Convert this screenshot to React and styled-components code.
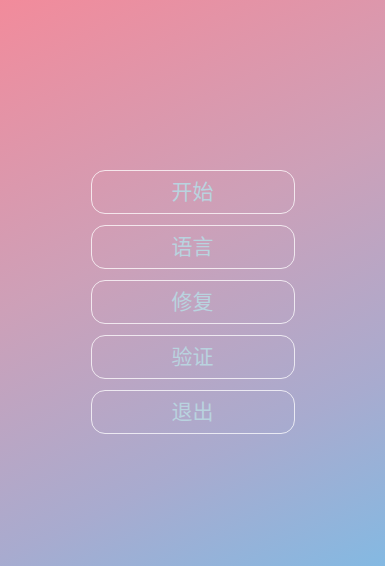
import React from 'react';
import styled, { createGlobalStyle } from 'styled-components';

const items = ['开始', '语言', '修复', '验证', '退出'];

const App = () => {
  return (
    <>
      <GlobalStyle />
      <Screen>
        <Menu>
          {items.map((label) => (
            <MenuButton key={label}>{label}</MenuButton>
          ))}
        </Menu>
      </Screen>
    </>
  );
};

const GlobalStyle = createGlobalStyle`
  html, body {
    margin: 0;
    padding: 0;
    height: 100%;
    overflow: hidden;
    font-family: 'Noto Sans CJK SC', 'Noto Sans', sans-serif;
  }

  #root {
    height: 100%;
  }
`;

const Screen = styled.div`
  width: 100vw;
  height: 100vh;
  background: linear-gradient(155deg, #f28b9b 0%, #cda0b8 42%, #a8abcf 75%, #84b9e2 100%);
  display: flex;
  justify-content: center;
  padding-top: 170px;
  box-sizing: border-box;
`;

const Menu = styled.div`
  display: flex;
  flex-direction: column;
  gap: 11px;
  width: 204px;
`;

const MenuButton = styled.button`
  height: 44px;
  border: 1px solid rgba(255, 255, 255, 0.75);
  border-radius: 14px;
  background: transparent;
  color: #b9d3df;
  font-family: 'Noto Sans CJK SC', sans-serif;
  font-size: 21px;
  line-height: 1;
  cursor: pointer;
  padding: 0 0 3px;
`;

export default App;
